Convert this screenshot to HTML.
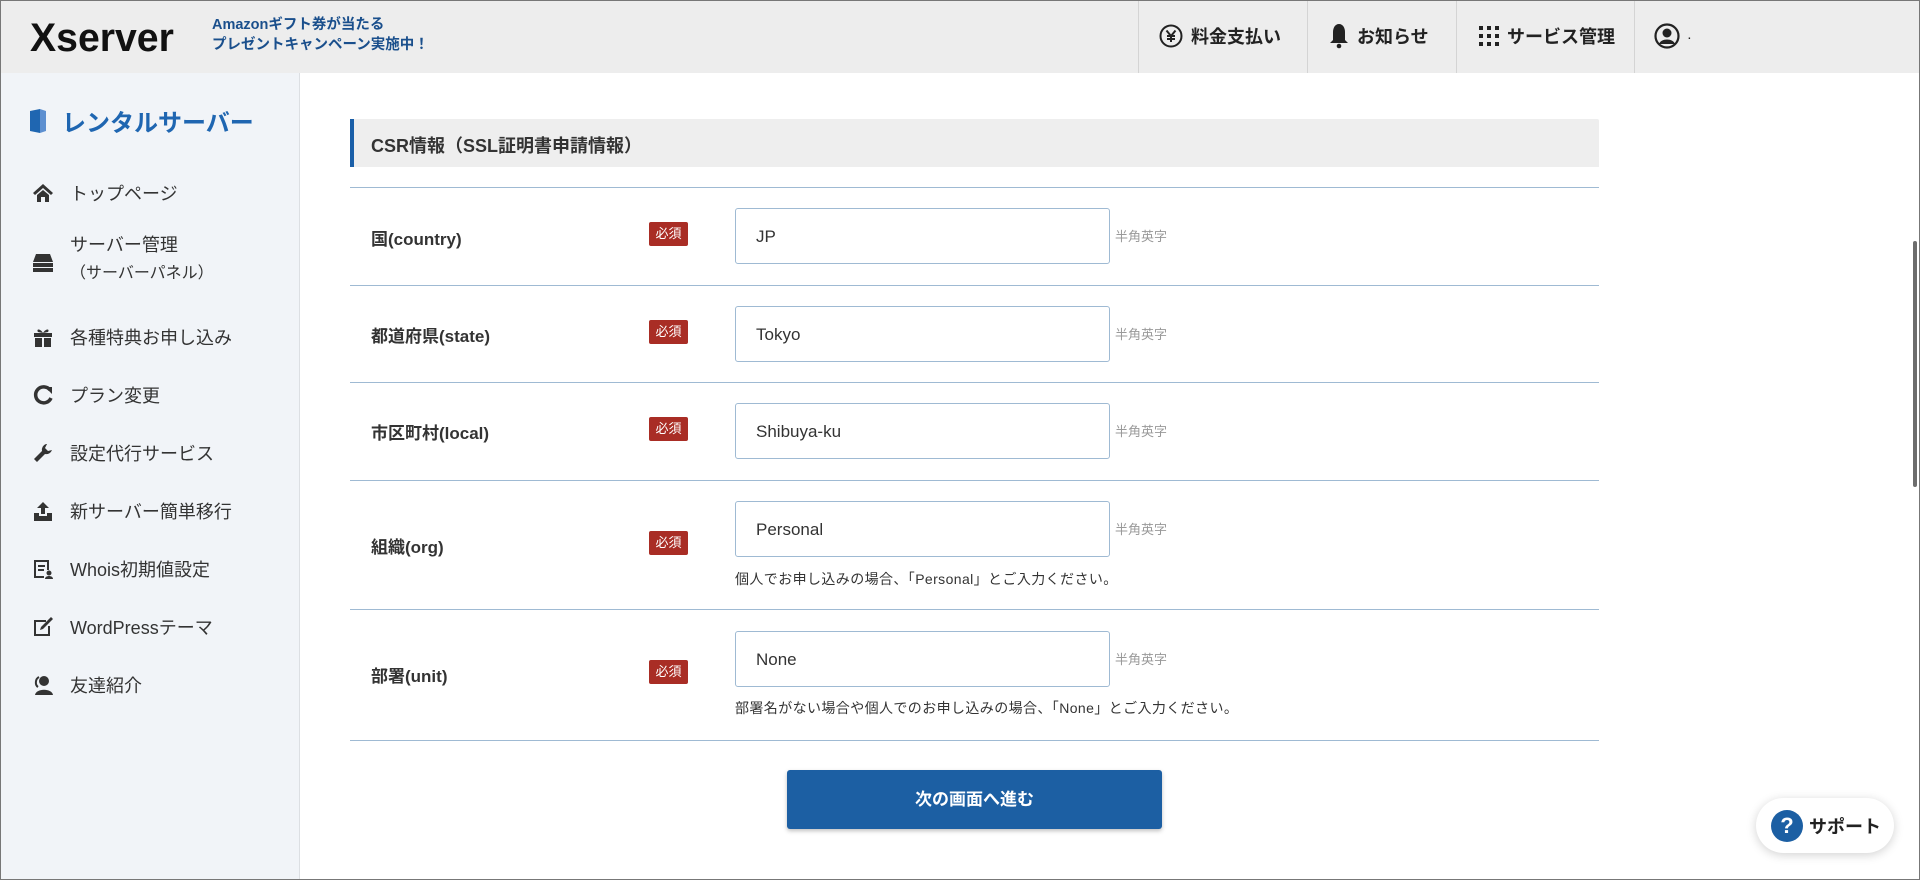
<!DOCTYPE html>
<html><head><meta charset="utf-8"><style>
*{margin:0;padding:0;box-sizing:border-box}
body{width:1920px;height:880px;overflow:hidden;background:#fff;font-family:"Liberation Sans","Noto Sans CJK JP",sans-serif;color:#333;position:relative}
.abs{position:absolute}
#frame{position:absolute;left:0;top:0;width:1920px;height:880px;border:1px solid #777;pointer-events:none;z-index:10}
header{position:absolute;left:0;top:0;width:1920px;height:73px;background:#ededed}
.logo{left:30px;top:16px;font-size:40px;font-weight:bold;color:#111;letter-spacing:0px;transform:scaleX(0.98);transform-origin:left}
.promo{left:212px;top:15px;font-size:14.5px;font-weight:bold;color:#1a4f8c;line-height:20px}
.div{top:0;width:1px;height:73px;background:#d4d4d4}
.hi{top:23px;font-size:18px;font-weight:bold;color:#222;display:flex;align-items:center;gap:8px}
aside{position:absolute;left:0;top:73px;width:300px;height:807px;background:#f1f4f8;border-right:1px solid #dcdfe3}
.st{left:28px;top:104px;font-size:24px;color:#1f66b1;font-weight:bold;display:flex;align-items:center;gap:14px}
.mi{left:32px;font-size:18px;color:#333;display:flex;align-items:center}
.mi svg{width:22px;height:22px;margin-right:16px}
.h2{left:350px;top:119px;width:1249px;height:48px;background:#eee;border-left:4px solid #1a5fa8;font-size:18px;font-weight:bold;padding:13px 0 0 17px;border-radius:0 2px 0 0}
.line{left:350px;width:1249px;height:1px;background:#9fbad3}
.lb{left:371px;font-size:17px;font-weight:bold;color:#333}
.bd{left:649px;width:39px;height:24px;background:#a92d25;color:#fff;font-size:13px;text-align:center;line-height:24px;border-radius:2px}
.in{left:735px;width:375px;height:56px;border:1px solid #9fbad3;border-radius:3px;font-size:17px;padding:18px 0 0 20px;color:#333}
.ha{left:1115px;font-size:13px;color:#999}
.hint{left:735px;font-size:14px;color:#333;letter-spacing:0.4px}
.btn{left:787px;top:770px;width:375px;height:59px;background:#1c5fa3;color:#fff;font-size:17px;font-weight:bold;text-align:center;line-height:59px;border-radius:3px;box-shadow:0 2px 4px rgba(0,0,0,.25)}
.sup{left:1756px;top:798px;width:138px;height:55px;background:#fff;border-radius:28px;box-shadow:0 2px 10px rgba(0,0,0,.18);display:flex;align-items:center;padding-left:15px;gap:6px;font-size:18px;font-weight:bold;color:#222}
.q{width:32px;height:32px;border-radius:50%;background:#1c5fa3;color:#fff;font-size:22px;text-align:center;line-height:32px}
</style></head><body>
<header>
<div class="abs logo">Xserver</div>
<div class="abs promo">Amazonギフト券が当たる<br>プレゼントキャンペーン実施中！</div>
<div class="abs div" style="left:1138px"></div>
<div class="abs div" style="left:1307px"></div>
<div class="abs div" style="left:1456px"></div>
<div class="abs div" style="left:1634px"></div>
<div class="abs hi" style="left:1159px"><svg width="24" height="24" viewBox="0 0 24 24"><circle cx="12" cy="12" r="10.5" fill="none" stroke="#222" stroke-width="2"/><path d="M7.5 6.5L12 12L16.5 6.5M12 12V18M8 12H16M8 15H16" stroke="#222" stroke-width="2" fill="none"/></svg>料金支払い</div>
<div class="abs hi" style="left:1329px"><svg width="20" height="26" viewBox="0 0 20 26"><path d="M10 1C6 1 4 5 4 9V17L1 20H19L16 17V9C16 5 14 1 10 1Z" fill="#222"/><circle cx="10" cy="23" r="2.3" fill="#222"/></svg>お知らせ</div>
<div class="abs hi" style="left:1479px"><svg width="20" height="20" viewBox="0 0 20 20" fill="#222"><rect x="0" y="0" width="4" height="4"/><rect x="8" y="0" width="4" height="4"/><rect x="16" y="0" width="4" height="4"/><rect x="0" y="8" width="4" height="4"/><rect x="8" y="8" width="4" height="4"/><rect x="16" y="8" width="4" height="4"/><rect x="0" y="16" width="4" height="4"/><rect x="8" y="16" width="4" height="4"/><rect x="16" y="16" width="4" height="4"/></svg>サービス管理</div>
<div class="abs hi" style="left:1654px"><svg width="26" height="26" viewBox="0 0 26 26"><circle cx="13" cy="13" r="11.5" fill="none" stroke="#222" stroke-width="2.2"/><circle cx="13" cy="10" r="4.5" fill="#222"/><path d="M5 21C7 15 19 15 21 21Z" fill="#222"/></svg><span style="font-size:10px">.</span></div>
</header>
<aside>
<div class="abs st" style="top:30px"><svg width="20" height="26" viewBox="0 0 20 26"><path d="M2 3L12 1V25L2 23Z" fill="#1f66b1"/><path d="M12 1L18 3V23L12 25Z" fill="#5d8fd0"/></svg>レンタルサーバー</div>
<div class="abs mi" style="top:107px"><svg viewBox="0 0 22 22"><path d="M11 2L1 11L3 13L11 6L19 13L21 11Z M5 13V20H9V15H13V20H17V13L11 8Z" fill="#333"/></svg>トップページ</div>
<div class="abs mi" style="top:158px;align-items:flex-start"><svg viewBox="0 0 22 22" style="margin-top:20px"><path d="M4 3H18L21 11H1Z M1 12H21V16H1Z M1 17H21V21H1Z" fill="#333"/></svg><div>サーバー管理<br><span style="font-size:16px;line-height:34px">（サーバーパネル）</span></div></div>
<div class="abs mi" style="top:251px"><svg viewBox="0 0 22 22"><path d="M2 7H20V11H2Z M3 12H10V21H3Z M12 12H19V21H12Z M11 7C8 2 4 3 6 6Z M11 7C14 2 18 3 16 6Z" fill="#333"/></svg>各種特典お申し込み</div>
<div class="abs mi" style="top:309px"><svg viewBox="0 0 22 22"><path d="M18 6A8 8 0 1 0 19 14" fill="none" stroke="#333" stroke-width="3.5"/><path d="M13 3H20V10Z" fill="#333"/></svg>プラン変更</div>
<div class="abs mi" style="top:367px"><svg viewBox="0 0 22 22"><path d="M14 2A6 6 0 0 0 10 9L2 17L5 20L13 12A6 6 0 0 0 20 8L16 9L13 6L15 2Z" fill="#333"/></svg>設定代行サービス</div>
<div class="abs mi" style="top:425px"><svg viewBox="0 0 22 22"><path d="M11 2L5 8H9V14H13V8H17Z M2 13H7V16H15V13H20V21H2Z" fill="#333"/></svg>新サーバー簡単移行</div>
<div class="abs mi" style="top:483px"><svg viewBox="0 0 22 22"><path d="M2 2H17V12H15V4H4V18H12V20H2Z M6 7H13V9H6Z M6 11H12V13H6Z" fill="#333"/><circle cx="17" cy="15" r="2.5" fill="#333"/><path d="M13 21C13 17 21 17 21 21Z" fill="#333"/></svg>Whois初期値設定</div>
<div class="abs mi" style="top:541px"><svg viewBox="0 0 22 22"><path d="M2 4H14V6H4V18H16V10H18V20H2Z" fill="#333"/><path d="M19 1L21 3L11 13L8 14L9 11Z" fill="#333"/></svg>WordPressテーマ</div>
<div class="abs mi" style="top:599px"><svg viewBox="0 0 22 22"><circle cx="12" cy="7" r="5" fill="#333"/><path d="M3 21C4 14 20 14 21 21Z" fill="#333"/><path d="M7 3C3 5 3 11 6 13" stroke="#333" stroke-width="2" fill="none"/></svg>友達紹介</div>
</aside>
<div class="abs h2">CSR情報（SSL証明書申請情報）</div>
<div class="abs line" style="top:187px"></div>
<div class="abs line" style="top:285px"></div>
<div class="abs line" style="top:382px"></div>
<div class="abs line" style="top:480px"></div>
<div class="abs line" style="top:609px"></div>
<div class="abs line" style="top:740px"></div>

<div class="abs lb" style="top:225px">国(country)</div>
<div class="abs bd" style="top:222px">必須</div>
<div class="abs in" style="top:208px">JP</div>
<div class="abs ha" style="top:226px">半角英字</div>

<div class="abs lb" style="top:322px">都道府県(state)</div>
<div class="abs bd" style="top:320px">必須</div>
<div class="abs in" style="top:306px">Tokyo</div>
<div class="abs ha" style="top:324px">半角英字</div>

<div class="abs lb" style="top:419px">市区町村(local)</div>
<div class="abs bd" style="top:417px">必須</div>
<div class="abs in" style="top:403px">Shibuya-ku</div>
<div class="abs ha" style="top:421px">半角英字</div>

<div class="abs lb" style="top:533px">組織(org)</div>
<div class="abs bd" style="top:531px">必須</div>
<div class="abs in" style="top:501px">Personal</div>
<div class="abs ha" style="top:519px">半角英字</div>
<div class="abs hint" style="top:569px">個人でお申し込みの場合、「Personal」とご入力ください。</div>

<div class="abs lb" style="top:662px">部署(unit)</div>
<div class="abs bd" style="top:660px">必須</div>
<div class="abs in" style="top:631px">None</div>
<div class="abs ha" style="top:649px">半角英字</div>
<div class="abs hint" style="top:698px">部署名がない場合や個人でのお申し込みの場合、「None」とご入力ください。</div>

<div class="abs btn">次の画面へ進む</div>
<div class="abs sup"><div class="q">?</div>サポート</div>
<div class="abs" style="left:1913px;top:241px;width:4px;height:246px;background:#6d6d6d;border-radius:2px"></div>
<div id="frame"></div>
</body></html>
